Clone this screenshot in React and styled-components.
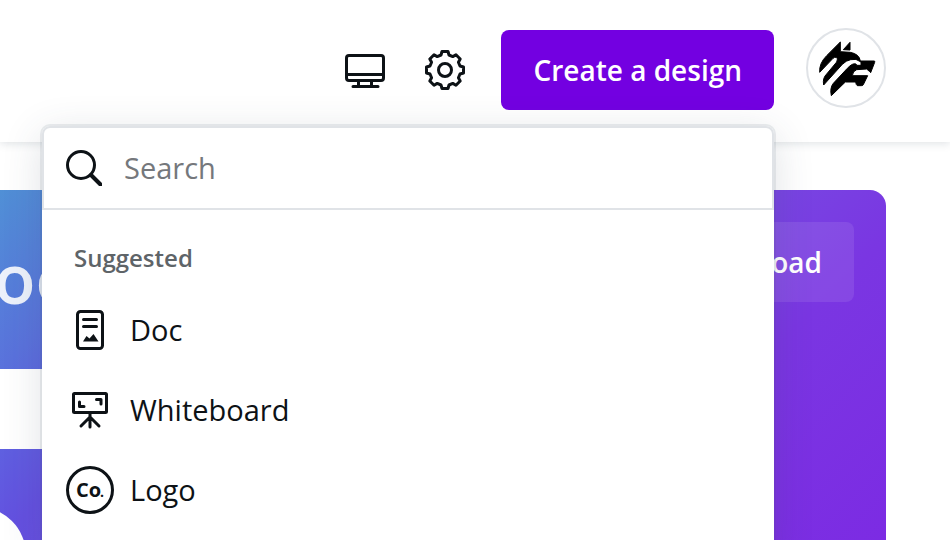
import styled, { createGlobalStyle } from "styled-components";

const colors = {
  ink: "#0d1216",
  grey: "#5e6468",
  placeholder: "#75787c",
  line: "#e0e3e7",
  purple: "#7300e1",
};

const GlobalStyle = createGlobalStyle`
  * {
    box-sizing: border-box;
  }
  body {
    margin: 0;
    background: #fff;
    color: ${colors.ink};
    font-family: "Open Sans", "Noto Sans", sans-serif;
    font-size: 28px;
  }
  button,
  input {
    font: inherit;
    color: inherit;
  }
`;

const Page = styled.div`
  display: flex;
  flex-direction: column;
  height: 100vh;
  overflow: hidden;
`;
const Header = styled.header`
  position: relative;
  z-index: 1;
  display: flex;
  justify-content: flex-end;
  align-items: flex-end;
  gap: 32px;
  min-height: 142px;
  padding: 28px 64px 32px;
  background: #fff;
  box-shadow: 0 2px 8px rgba(57, 76, 96, 0.15);
`;
const IconButton = styled.button`
  display: flex;
  align-items: center;
  height: 80px;
  padding: 0;
  border: 0;
  background: none;
  cursor: pointer;
`;
const Icon = styled.svg`
  display: block;
  flex: none;
  width: ${({ $size }) => $size || 48}px;
  height: ${({ $size }) => $size || 48}px;
  fill: none;
  stroke: currentColor;
  stroke-width: 3;
  stroke-linecap: round;
  stroke-linejoin: round;
`;
const CreateArea = styled.div`
  position: relative;
`;
const Button = styled.button`
  display: block;
  height: 80px;
  padding: 0 32px;
  border: 0;
  border-radius: 8px;
  background: ${({ $soft }) =>
    $soft ? "rgba(255, 255, 255, 0.09)" : colors.purple};
  color: #fff;
  font-weight: 600;
  white-space: nowrap;
  cursor: pointer;
`;
const Avatar = styled.button`
  align-self: flex-start;
  width: 80px;
  height: 80px;
  padding: 0;
  border: 2px solid ${colors.line};
  border-radius: 50%;
  background: #fff;
  overflow: hidden;
  cursor: pointer;
`;
const Menu = styled.div`
  position: absolute;
  top: calc(100% + 16px);
  right: 0;
  width: 732px;
  padding-bottom: 32px;
  border-radius: 8px;
  background: #fff;
  box-shadow: 0 0 0 2px rgba(64, 87, 109, 0.1),
    0 8px 40px rgba(53, 71, 90, 0.16);
`;
const SearchField = styled.label`
  display: flex;
  align-items: center;
  gap: 22px;
  height: 84px;
  padding: 0 22px;
  border: 2px solid ${colors.line};
  border-radius: 8px 8px 0 0;
`;
const SearchInput = styled.input`
  flex: 1;
  min-width: 0;
  padding: 0;
  border: 0;
  outline: 0;
  background: none;
  font-size: 29px;
  line-height: 40px;
  &::placeholder {
    color: ${colors.placeholder};
    opacity: 1;
  }
`;
const GroupTitle = styled.h2`
  margin: 0;
  padding: 32px 32px 16px;
  color: ${colors.grey};
  font-size: 24px;
  font-weight: 600;
  line-height: 32px;
`;
const List = styled.ul`
  margin: 0;
  padding: 0;
  list-style: none;
`;
const Item = styled.a`
  display: flex;
  align-items: center;
  gap: 16px;
  height: 80px;
  padding: 0 24px;
  color: inherit;
  font-size: 29px;
  line-height: 40px;
  text-decoration: none;
`;
const Hero = styled.main`
  display: flex;
  flex: 1 0 auto;
  flex-direction: column;
  margin: 48px 64px 0 0;
  border-radius: 0 16px 0 0;
  overflow: hidden;
  background: linear-gradient(
    135deg,
    #5090d6 0,
    #5a72dc 127px,
    #5f60e0 184px,
    #6450e0 247px,
    #7845e2 551px,
    #7a36e2 660px,
    #7c2be3 874px
  );
`;
const HeroTop = styled.div`
  display: flex;
  justify-content: space-between;
  align-items: flex-start;
  height: 179px;
  padding: 32px 32px 0 0;
`;
const HeroTitle = styled.h1`
  margin: 16px 0 0 -6px;
  color: #ecf1fb;
  font-size: 68px;
  font-weight: 600;
  line-height: 80px;
`;
const HeroSearch = styled.input`
  width: 80%;
  height: 80px;
  padding: 0;
  border: 0;
  background: #fff;
`;
const Category = styled.button`
  width: 96px;
  height: 96px;
  margin: 58px 0 0 -70px;
  border: 0;
  border-radius: 50%;
  background: #fff;
`;
const Logo = styled.svg`
  display: block;
  width: 76px;
  height: 76px;
`;

const MonitorIcon = () => (
  <Icon viewBox="0 0 48 48" aria-hidden="true">
    <rect x="5.5" y="9.5" width="37" height="25" rx="2.5" />
    <path d="M5.5 28.5h37M17.5 35v5M30.5 35v5M12 40.5h25" />
  </Icon>
);

const teeth = [0, 45, 90, 135, 180, 225, 270, 315];
const GearIcon = () => {
  const base = [
    [-4, -15],
    [-3, -18.5],
    [3, -18.5],
    [4, -15],
  ];
  const points = teeth.flatMap((deg) => {
    const a = (deg * Math.PI) / 180;
    return base.map(([x, y]) =>
      [
        24 + x * Math.cos(a) - y * Math.sin(a),
        24 + x * Math.sin(a) + y * Math.cos(a),
      ].join(",")
    );
  });
  return (
    <Icon viewBox="0 0 48 48" aria-hidden="true">
      <polygon points={points.join(" ")} />
      <circle cx="24" cy="24" r="6.5" />
    </Icon>
  );
};

const SearchIcon = () => (
  <Icon $size={36} viewBox="0 0 36 36" aria-hidden="true">
    <circle cx="15" cy="15" r="13.5" />
    <path d="m25 25 9.5 9.5" strokeWidth="4" />
  </Icon>
);

const WolfLogo = () => (
  <Logo viewBox="6 6 228 228" aria-hidden="true">
    <path
      stroke="#000"
      strokeWidth="3"
      strokeLinejoin="round"
      d="M112 65 132 43V66ZM103 42V71L133 73Q160 78 163 99H204Q208 99 206 103L194 134 190 130 182 123 152 125Q140 129 139 143H185L172 170Q171 173 166 173H154Q150 171 149 162H118L76 203Q71 180 82 166L124 121Q140 104 150 108 152 109 152 112H165V102Q150 90 134 95 121 97 109 109L53 171Q49 150 62 138L92 102Q98 86 86 88L81 91 41 133Q39 106 62 83Z"
    />
  </Logo>
);

const DocIcon = () => (
  <Icon viewBox="0 0 48 48" aria-hidden="true">
    <rect x="11.5" y="5.5" width="25" height="37" rx="3" />
    <path d="M17.5 13.5h13M17.5 20.5h13" />
    <path
      d="M17 35.5 20.5 30l3 2.5L27.5 28l5 7.5Z"
      fill="currentColor"
      stroke="none"
    />
  </Icon>
);

const WhiteboardIcon = () => (
  <Icon viewBox="0 0 48 48" aria-hidden="true">
    <rect x="7.5" y="7.5" width="33" height="19" rx="1" />
    <path d="M13.5 16v4.5H18M30.5 13.5H35V18M24 28v13M24 31l-9 9M24 31l9 9" />
  </Icon>
);

const LogoIcon = () => (
  <Icon viewBox="0 0 48 48" aria-hidden="true">
    <circle cx="24" cy="24" r="22.5" />
    <g fill="currentColor" stroke="none" fontWeight="700">
      <text x="10" y="31" fontSize="20">
        Co
      </text>
      <text x="34" y="31" fontSize="14">
        .
      </text>
    </g>
  </Icon>
);

const suggestions = [
  { name: "Doc", Glyph: DocIcon },
  { name: "Whiteboard", Glyph: WhiteboardIcon },
  { name: "Logo", Glyph: LogoIcon },
];

const App = () => (
  <>
    <GlobalStyle />
    <Page>
      <Header>
        <IconButton aria-label="Apps">
          <MonitorIcon />
        </IconButton>
        <IconButton aria-label="Settings">
          <GearIcon />
        </IconButton>
        <CreateArea>
          <Button>Create a design</Button>
          <Menu>
            <SearchField>
              <SearchIcon />
              <SearchInput aria-label="Search" placeholder="Search" />
            </SearchField>
            <GroupTitle>Suggested</GroupTitle>
            <List>
              {suggestions.map(({ name, Glyph }) => (
                <li key={name}>
                  <Item href="#">
                    <Glyph />
                    {name}
                  </Item>
                </li>
              ))}
            </List>
          </Menu>
        </CreateArea>
        <Avatar aria-label="Account">
          <WolfLogo />
        </Avatar>
      </Header>
      <Hero>
        <HeroTop>
          <HeroTitle>oo</HeroTitle>
          <Button $soft>Upload</Button>
        </HeroTop>
        <HeroSearch aria-label="Search content" />
        <Category aria-label="Category" />
      </Hero>
    </Page>
  </>
);

export default App;
